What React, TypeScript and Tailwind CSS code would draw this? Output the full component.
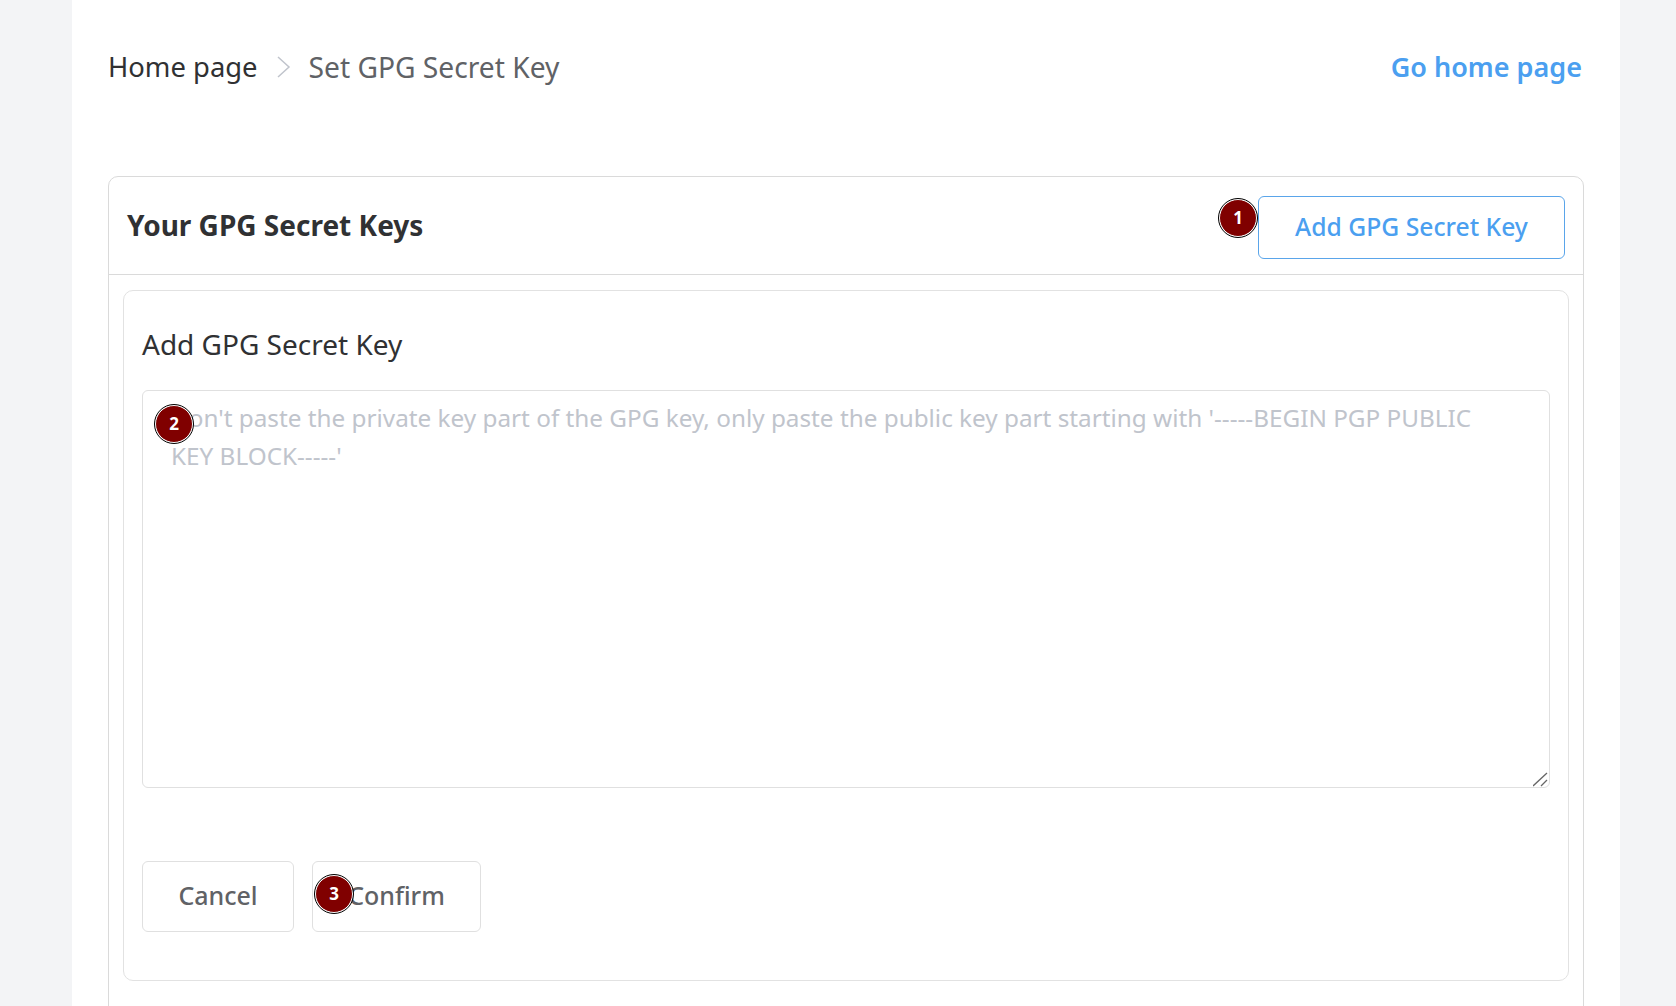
const Badge = ({ n, className }: { n: number; className: string }) => (
  <span
    className={`absolute flex h-[38px] w-[38px] items-center justify-center rounded-full border border-white bg-[#800000] text-[17px] font-bold text-white outline outline-[1.5px] outline-black ${className}`}
  >
    {n}
  </span>
);

const placeholder =
  "Don't paste the private key part of the GPG key, only paste the public key part starting with '-----BEGIN PGP PUBLIC KEY BLOCK-----'";

export default function App() {
  return (
    <div className="h-screen overflow-hidden bg-[#f3f4f6] font-['Noto_Sans',sans-serif]">
      <div className="ml-[72px] w-[1548px] bg-white px-9">
        <div className="flex h-[176px] items-start justify-between pt-[46px]">
          <div className="flex items-center leading-[42px]">
            <span className="text-[27.4px] text-[#303133]">Home page</span>
            <svg width="18" height="24" viewBox="0 0 18 24" fill="none" className="ml-[17px] mr-[16px]">
              <path d="M3 2l11 10L3 22" stroke="#c0c4cc" strokeWidth="1.5" />
            </svg>
            <span className="text-[28.2px] text-[#606266]">Set GPG Secret Key</span>
          </div>
          <a className="mr-[2px] text-[27px] font-semibold leading-[42px] text-[#4b9ff0]">Go home page</a>
        </div>

        <div className="rounded-[10px] border border-[#dadada]">
          <div className="flex h-[98px] items-start justify-between border-b border-[#dadada] px-[18px]">
            <h2 className="mt-[26px] text-[28px] font-bold leading-[44px] text-[#303133]">Your GPG Secret Keys</h2>
            <button className="relative mt-[19px] h-[63px] w-[307px] rounded-[6px] border border-[#5aa5ea] pb-[2px] text-[24.7px] font-medium text-[#4b9ff0]">
              <Badge n={1} className="-left-[40px] top-[2px]" />
              Add GPG Secret Key
            </button>
          </div>

          <div className="px-[14px] pb-[60px] pt-[15px]">
            <div className="h-[691px] rounded-[10px] border border-[#e2e2e2] px-[18px] pt-[31px]">
              <h3 className="text-[28px] leading-[44px] text-[#303133]">Add GPG Secret Key</h3>
              <div className="relative mt-[24px]">
                <textarea
                  placeholder={placeholder}
                  className="block h-[398px] w-full resize-none rounded-[6px] border border-[#e0e0e0] py-[8px] pl-[28px] pr-[60px] text-[24.3px] leading-[38px] text-[#606266] outline-none placeholder:text-[#c0c4cc]"
                />
                <Badge n={2} className="left-[13px] top-[15px]" />
                <svg width="16" height="16" viewBox="0 0 16 16" fill="none" className="absolute bottom-0 right-px">
                  <path d="M0 14L14 1M8 14l6-6" stroke="#666" strokeWidth="1.3" />
                </svg>
              </div>
              <div className="mt-[73px] flex gap-[18px]">
                <button className="h-[71px] w-[152px] rounded-[6px] border border-[#e0e0e0] pb-px text-[25px] font-medium text-[#606266]">
                  Cancel
                </button>
                <button className="relative h-[71px] w-[169px] rounded-[6px] border border-[#e0e0e0] pb-px text-[25px] font-medium text-[#606266]">
                  <Badge n={3} className="left-[2px] top-[13px]" />
                  Confirm
                </button>
              </div>
            </div>
          </div>
        </div>
      </div>
    </div>
  );
}
